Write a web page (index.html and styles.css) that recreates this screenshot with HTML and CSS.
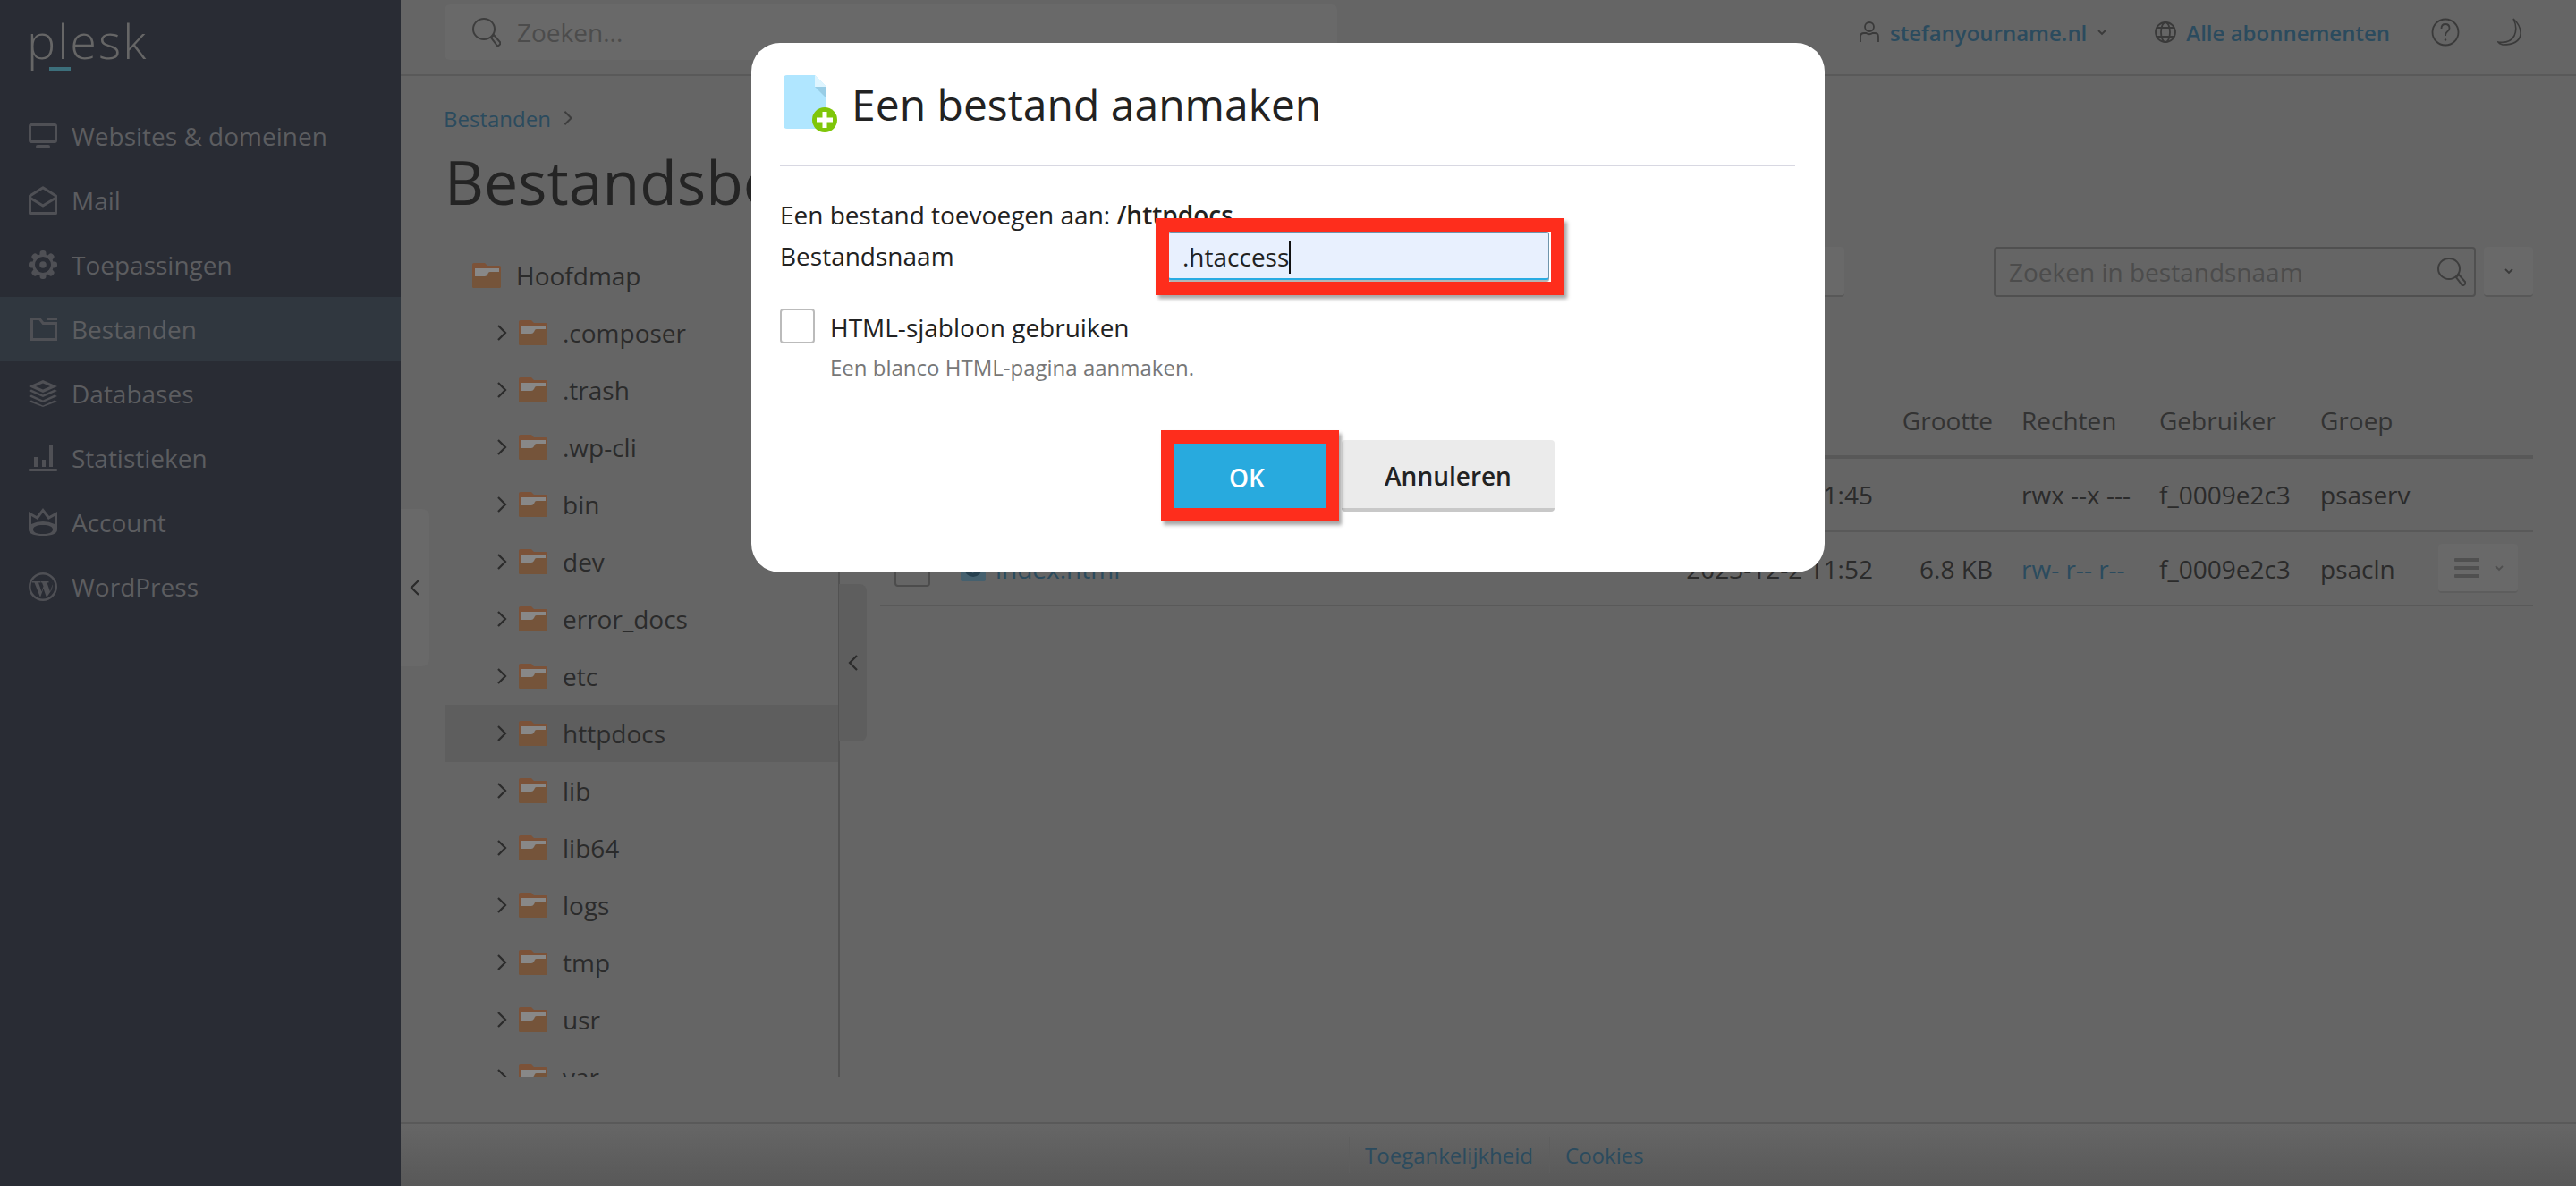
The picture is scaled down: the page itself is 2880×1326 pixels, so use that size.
FILE: index.html
```html
<!DOCTYPE html>
<html lang="nl">
<head>
  <meta charset="UTF-8" />
  <title>Bestandsbeheer</title>
  <link rel="stylesheet" href="styles.css">
</head>
<body>

<svg class="defs" width="0" height="0">
  <defs>
    <symbol id="folder" viewBox="0 0 32 28">
      <path d="M0 2q0-2 2-2h12l3 3h13q2 0 2 2v21q0 2-2 2H2q-2 0-2-2z" fill="#7c5238"/>
      <rect x="3" y="6" width="27" height="10" fill="#888"/>
      <path d="M0 15h14q2 0 3-2l1-2q.5-1 2-1h12v16q0 2-2 2H2q-2 0-2-2z" fill="#75543a"/>
    </symbol>
    <symbol id="chev-right" viewBox="0 0 12 20">
      <path d="M2 2l8 8-8 8" fill="none" stroke="currentColor" stroke-width="2.2"/>
    </symbol>
    <symbol id="chev-left" viewBox="0 0 12 20">
      <path d="M10 2l-8 8 8 8" fill="none" stroke="currentColor" stroke-width="2.2"/>
    </symbol>
    <symbol id="chev-down" viewBox="0 0 12 8">
      <path d="M2 2l4 4 4-4" fill="none" stroke="currentColor" stroke-width="1.8"/>
    </symbol>
    <symbol id="search" viewBox="0 0 32 32">
      <ellipse cx="13" cy="12.5" rx="12" ry="11.5" fill="none" stroke="currentColor" stroke-width="2"/>
      <path d="M21 22l3-3 7 8q1 2-1 3.500t-3-.5z" fill="none" stroke="currentColor" stroke-width="2"/>
    </symbol>
  </defs>
</svg>

<div class="app">
  <aside class="sidebar">
    <div class="logo"><span class="logo-text">plesk</span><span class="logo-bar"></span></div>
    <nav class="nav">
      <a class="nav-item">
        <svg class="nav-icon" viewBox="0 0 32 32"><rect class="line" x="1.500" y="3.500" width="29" height="19" rx="1.500"/><rect x="8" y="26" width="16" height="4" rx="2"/></svg>
        Websites &amp; domeinen
      </a>
      <a class="nav-item">
        <svg class="nav-icon" viewBox="0 0 32 32"><path class="line" d="M1.500 11L16 1.800 30.500 11v19.500h-29z"/><path class="line" d="M2 13.500l14 8.500 14-8.500"/></svg>
        Mail
      </a>
      <a class="nav-item">
        <svg class="nav-icon" viewBox="0 0 32 32">
          <circle class="line" cx="16" cy="16" r="10.500"/>
          <rect x="12.500" y="0" width="7" height="7" rx="3"/>
          <rect x="12.500" y="0" width="7" height="7" rx="3" transform="rotate(45 16 16)"/>
          <rect x="12.500" y="0" width="7" height="7" rx="3" transform="rotate(90 16 16)"/>
          <rect x="12.500" y="0" width="7" height="7" rx="3" transform="rotate(135 16 16)"/>
          <rect x="12.500" y="0" width="7" height="7" rx="3" transform="rotate(180 16 16)"/>
          <rect x="12.500" y="0" width="7" height="7" rx="3" transform="rotate(225 16 16)"/>
          <rect x="12.500" y="0" width="7" height="7" rx="3" transform="rotate(270 16 16)"/>
          <rect x="12.500" y="0" width="7" height="7" rx="3" transform="rotate(315 16 16)"/>
          <circle cx="16" cy="16" r="3.800"/>
        </svg>
        Toepassingen
      </a>
      <a class="nav-item active">
        <svg class="nav-icon" viewBox="0 0 32 32"><path d="M2 3h11l4 5h15v21H2zm3 3v20h24V11H15.500l-4-5zM20 3h12v3H20z" fill-rule="evenodd"/></svg>
        Bestanden
      </a>
      <a class="nav-item">
        <svg class="nav-icon" viewBox="0 0 32 32"><path d="M16 1l16 7-16 7L0 8zm0 3.500L8 8l8 3.500L24 8z" fill-rule="evenodd"/><path d="M0 13l3-1.500 13 6 13-6 3 1.500-16 7z"/><path d="M0 19l3-1.500 13 6 13-6 3 1.500-16 7z"/><path d="M0 25l3-1.500 13 6 13-6 3 1.500-16 6z"/></svg>
        Databases
      </a>
      <a class="nav-item">
        <svg class="nav-icon" viewBox="0 0 32 32"><rect x="0" y="28" width="32" height="3" rx="1"/><rect x="6" y="15" width="4" height="11"/><rect x="15" y="18" width="4" height="8"/><rect x="23" y="1" width="4" height="25"/></svg>
        Statistieken
      </a>
      <a class="nav-item">
        <svg class="nav-icon" viewBox="0 0 32 32"><path d="M16 0l7 9 9-5v20q0 7-16 7T0 24V4l9 5zM16 5l-6 8-7-4v9q6-3 13-3t13 3V9l-7 4zM16 19C9 19 5 21 5 24s4 5 11 5 11-2 11-5-4-5-11-5z" fill-rule="evenodd"/></svg>
        Account
      </a>
      <a class="nav-item">
        <svg class="nav-icon" viewBox="0 0 32 32"><path d="M16 0a16 16 0 1 0 0 32 16 16 0 0 0 0-32zm0 2.500a13.500 13.500 0 1 1 0 27 13.500 13.500 0 0 1 0-27z" fill-rule="evenodd"/><path d="M4 10h9v1.500h-2l3.500 10 2-6-1.500-4h-1.500V10h9v1.500h-2l3.500 10 2-6q1-3-1-5.500 3 4 .5 10L20 28l-3.500-10L13 28 6.500 11.500H4z"/></svg>
        WordPress
      </a>
    </nav>
  </aside>

  <div class="main">
    <header class="topbar">
      <div class="global-search">
        <svg class="icon-search"><use href="#search"></use></svg>
        <span>Zoeken...</span>
      </div>
      <div class="top-links">
        <a class="top-link user-link">
          <svg class="top-icon" viewBox="0 0 24 24"><circle cx="12" cy="6" r="5"/><path d="M2 23v-6q0-4 4-4h2.500q3.500 2.500 7 0H18q4 0 4 4v6"/></svg>
          stefanyourname.nl
          <svg class="chev-small"><use href="#chev-down"></use></svg>
        </a>
        <a class="top-link">
          <svg class="top-icon" viewBox="0 0 24 24"><circle cx="12" cy="12" r="11"/><ellipse cx="12" cy="12" rx="5" ry="11"/><path d="M2 7h20M2 17h20"/></svg>
          Alle abonnementen
        </a>
        <svg class="help-icon" viewBox="0 0 32 32"><circle cx="16" cy="16" r="14.500"/><path d="M11.500 12q0-5 4.500-5t4.500 4.500q0 2.500-2.500 4-2 1.500-2 4.500"/><circle class="dot" cx="16" cy="24.500" r="1.200"/></svg>
        <svg class="moon-icon" viewBox="0 0 28 32"><path d="M18 1q9 8 8 18-2 11-20 11-3-.5-5-3 13 2 18-7 4-9-1-19z"/></svg>
      </div>
    </header>

    <main class="content">
      <div class="breadcrumb">
        <a>Bestanden</a>
        <svg class="crumb-chev"><use href="#chev-right"></use></svg>
      </div>
      <h1>Bestandsbeheer</h1>

      <div class="manager">
        <div class="tree">
          <div class="tree-row root"><svg class="folder"><use href="#folder"></use></svg>Hoofdmap</div>
          <div class="tree-row"><svg class="tree-chev"><use href="#chev-right"></use></svg><svg class="folder"><use href="#folder"></use></svg>.composer</div>
          <div class="tree-row"><svg class="tree-chev"><use href="#chev-right"></use></svg><svg class="folder"><use href="#folder"></use></svg>.trash</div>
          <div class="tree-row"><svg class="tree-chev"><use href="#chev-right"></use></svg><svg class="folder"><use href="#folder"></use></svg>.wp-cli</div>
          <div class="tree-row"><svg class="tree-chev"><use href="#chev-right"></use></svg><svg class="folder"><use href="#folder"></use></svg>bin</div>
          <div class="tree-row"><svg class="tree-chev"><use href="#chev-right"></use></svg><svg class="folder"><use href="#folder"></use></svg>dev</div>
          <div class="tree-row"><svg class="tree-chev"><use href="#chev-right"></use></svg><svg class="folder"><use href="#folder"></use></svg>error_docs</div>
          <div class="tree-row"><svg class="tree-chev"><use href="#chev-right"></use></svg><svg class="folder"><use href="#folder"></use></svg>etc</div>
          <div class="tree-row selected"><svg class="tree-chev"><use href="#chev-right"></use></svg><svg class="folder"><use href="#folder"></use></svg>httpdocs</div>
          <div class="tree-row"><svg class="tree-chev"><use href="#chev-right"></use></svg><svg class="folder"><use href="#folder"></use></svg>lib</div>
          <div class="tree-row"><svg class="tree-chev"><use href="#chev-right"></use></svg><svg class="folder"><use href="#folder"></use></svg>lib64</div>
          <div class="tree-row"><svg class="tree-chev"><use href="#chev-right"></use></svg><svg class="folder"><use href="#folder"></use></svg>logs</div>
          <div class="tree-row"><svg class="tree-chev"><use href="#chev-right"></use></svg><svg class="folder"><use href="#folder"></use></svg>tmp</div>
          <div class="tree-row"><svg class="tree-chev"><use href="#chev-right"></use></svg><svg class="folder"><use href="#folder"></use></svg>usr</div>
          <div class="tree-row"><svg class="tree-chev"><use href="#chev-right"></use></svg><svg class="folder"><use href="#folder"></use></svg>var</div>
        </div>

        <div class="files">
          <div class="toolbar">
            <div class="tool-btn"></div>
            <div class="file-search">
              <span>Zoeken in bestandsnaam</span>
              <svg class="icon-search"><use href="#search"></use></svg>
            </div>
            <div class="drop-btn"><svg class="chev-small"><use href="#chev-down"></use></svg></div>
          </div>

          <table class="file-table">
            <colgroup>
              <col class="c-name"><col class="c-date"><col class="c-size"><col class="c-perm"><col class="c-user"><col class="c-group"><col class="c-act">
            </colgroup>
            <thead>
              <tr><th>Naam</th><th>Gewijzigd</th><th class="num">Grootte</th><th>Rechten</th><th>Gebruiker</th><th>Groep</th><th></th></tr>
            </thead>
            <tbody>
              <tr>
                <td></td>
                <td class="num">2023-12-2 11:45</td>
                <td class="num"></td>
                <td>rwx --x ---</td>
                <td>f_0009e2c3</td>
                <td>psaserv</td>
                <td></td>
              </tr>
              <tr>
                <td>
                  <div class="file-name">
                    <span class="row-check"></span>
                    <svg class="file-icon" viewBox="0 0 28 28"><rect width="28" height="28" rx="2" fill="#45606e"/><circle cx="14" cy="13" r="10" fill="#27404f"/><path d="M5 14q8-6 18-3-6 3-9 8z" fill="#45606e"/></svg>
                    <a>index.html</a>
                  </div>
                </td>
                <td class="num">2023-12-2 11:52</td>
                <td class="num">6.8 KB</td>
                <td><a>rw- r-- r--</a></td>
                <td>f_0009e2c3</td>
                <td>psacln</td>
                <td>
                  <div class="row-menu">
                    <svg class="burger" viewBox="0 0 28 22"><rect width="28" height="4" rx="1"/><rect y="9" width="28" height="4" rx="1"/><rect y="18" width="28" height="4" rx="1"/></svg>
                    <svg class="chev-small"><use href="#chev-down"></use></svg>
                  </div>
                </td>
              </tr>
            </tbody>
          </table>
        </div>

        <div class="tree-handle"><svg class="handle-chev"><use href="#chev-left"></use></svg></div>
      </div>
    </main>

    <footer class="footer">
      <a>Toegankelijkheid</a>
      <a>Cookies</a>
    </footer>
  </div>
</div>

<div class="side-handle"><svg class="handle-chev"><use href="#chev-left"></use></svg></div>

<div class="dialog">
  <div class="dialog-head">
    <svg class="dialog-icon" viewBox="0 0 62 64">
      <path d="M4 0h31l13 13v42q0 5-4 5H4q-4 0-4-4V4q0-4 4-4z" fill="#b0e6ff"/>
      <path d="M35 0l13 13H35z" fill="#dff5ff"/>
      <path d="M35 13h13v13z" fill="#98cde6"/>
      <circle cx="46" cy="50" r="14" fill="#7fc60a"/>
      <path d="M43.500 41h5v6.500H55v5h-6.500V59h-5v-6.500H37v-5h6.500z" fill="#fff"/>
    </svg>
    <h2>Een bestand aanmaken</h2>
  </div>

  <div class="dialog-body">
    <p class="add-line">Een bestand toevoegen aan: <b>/httpdocs</b></p>
    <div class="form-row">
      <label>Bestandsnaam</label>
      <div class="text-input"><span class="typed">.htaccess</span></div>
    </div>
    <div class="check-row">
      <span class="checkbox"></span>
      <label>HTML-sjabloon gebruiken</label>
    </div>
    <p class="hint">Een blanco HTML-pagina aanmaken.</p>
    <div class="buttons">
      <button class="btn btn-ok">OK</button>
      <button class="btn btn-cancel">Annuleren</button>
    </div>
  </div>

  <div class="callout callout-input"></div>
  <div class="callout callout-ok"></div>
</div>

</body>
</html>
```

FILE: styles.css
```css
* { box-sizing: border-box; }

body {
  margin: 0;
  width: 2880px;
  height: 1326px;
  overflow: hidden;
  position: relative;
  background: #656565;
  color: #2b2b2b;
  font-family: "Open Sans", sans-serif;
  font-size: 28px;
}

.defs { position: absolute; }

.app {
  display: flex;
  height: 1326px;
}

/* sidebar */
.sidebar {
  width: 448px;
  flex: none;
  background: #292c34;
  color: #5c5d60;
}

.logo {
  height: 116px;
  padding-left: 30px;
  position: relative;
}

.logo-text {
  display: block;
  font-size: 54px;
  font-weight: 300;
  line-height: 64px;
  letter-spacing: 2px;
  padding-top: 13px;
  color: #666;
}

.logo-bar {
  position: absolute;
  left: 55px;
  top: 75px;
  width: 24px;
  height: 4px;
  background: #3c6f7b;
}

.nav-item {
  display: flex;
  align-items: center;
  gap: 16px;
  height: 72px;
  padding-left: 32px;
}

.nav-item.active { background: #30373f; }

.nav-icon {
  width: 32px;
  height: 32px;
  flex: none;
  fill: #4f5055;
}

.nav-icon .line {
  fill: none;
  stroke: #4f5055;
  stroke-width: 3;
  stroke-linejoin: round;
}

/* main column */
.main {
  flex: 1;
  display: flex;
  flex-direction: column;
  min-width: 0;
}

.topbar {
  height: 85px;
  flex: none;
  display: flex;
  align-items: flex-start;
  padding: 5px 60px 0 49px;
  border-bottom: 2px solid #595959;
}

.global-search {
  width: 998px;
  height: 62px;
  display: flex;
  align-items: center;
  gap: 18px;
  padding-left: 31px;
  background: #696969;
  border-radius: 6px;
  color: #4c4c4c;
}

.icon-search {
  width: 32px;
  height: 32px;
  flex: none;
  color: #3d3d3d;
}

.top-links {
  margin-left: auto;
  height: 62px;
  display: flex;
  align-items: center;
  color: #2b4b5e;
  font-size: 24px;
  font-weight: 600;
}

.top-link {
  display: flex;
  align-items: center;
  gap: 11px;
  margin-right: 46px;
}

.user-link { margin-right: 53px; }

.top-icon {
  width: 24px;
  height: 24px;
  fill: none;
  stroke: #3a3a3a;
  stroke-width: 1.8;
}

.chev-small {
  width: 12px;
  height: 8px;
  color: #3a3a3a;
}

.help-icon {
  width: 32px;
  height: 32px;
  fill: none;
  stroke: #3a3a3a;
  stroke-width: 1.8;
  margin-right: 42px;
}

.help-icon .dot {
  fill: #3a3a3a;
  stroke: none;
}

.moon-icon {
  width: 28px;
  height: 32px;
  fill: none;
  stroke: #3a3a3a;
  stroke-width: 1.6;
}

/* page content */
.content {
  flex: 1;
  padding: 32px 48px 0 49px;
  min-height: 0;
}

.breadcrumb {
  display: flex;
  align-items: center;
  gap: 13px;
  height: 30px;
  margin-left: -1px;
  font-size: 24px;
  color: #2b4b5e;
}

.crumb-chev {
  width: 12px;
  height: 18px;
  color: #3d3d3d;
}

h1 {
  margin: 10px 0 0;
  font-size: 68px;
  font-weight: 400;
  line-height: 92px;
  color: #242424;
}

.manager {
  position: relative;
  display: flex;
  margin-top: 27px;
  height: 928px;
}

.tree {
  width: 442px;
  flex: none;
  height: 928px;
  overflow: hidden;
  border-right: 2px solid #525252;
}

.tree-row {
  display: flex;
  align-items: center;
  height: 64px;
  padding-left: 58px;
  color: #2b2b2b;
}

.tree-row.root { padding-left: 31px; }
.tree-row.selected { background: #5e5e5e; }

.tree-chev {
  width: 12px;
  height: 20px;
  margin-right: 13px;
  color: #2b2b2b;
  flex: none;
}

.folder {
  width: 32px;
  height: 28px;
  margin-right: 17px;
  flex: none;
}

.files {
  flex: 1;
  min-width: 0;
  margin-left: 45px;
}

.toolbar {
  display: flex;
  height: 56px;
}

.tool-btn {
  width: 300px;
  margin-left: 778px;
  background: #696969;
  border-bottom: 2px solid #585858;
  border-radius: 4px;
}

.file-search {
  width: 539px;
  margin-left: 167px;
  display: flex;
  align-items: center;
  justify-content: space-between;
  padding: 0 9px 0 15px;
  border: 2px solid #505050;
  border-radius: 4px;
  color: #4c4c4c;
}

.drop-btn {
  width: 55px;
  margin-left: 9px;
  display: flex;
  align-items: center;
  justify-content: center;
  background: #696969;
  border-bottom: 2px solid #585858;
  border-radius: 4px;
}

.file-table {
  width: 1848px;
  margin-top: 99px;
  table-layout: fixed;
  border-collapse: collapse;
}

.c-name { width: 806px; }
.c-date { width: 320px; }
.c-size { width: 134px; }
.c-perm { width: 154px; }
.c-user { width: 180px; }
.c-group { width: 132px; }
.c-act { width: 122px; }

.file-table th {
  height: 80px;
  padding: 0 16px;
  text-align: left;
  font-weight: 400;
  color: #333;
  border-bottom: 4px solid #585858;
}

.file-table th.num { text-align: right; }

.file-table td {
  height: 83px;
  padding: 0 16px;
  white-space: nowrap;
  color: #2b2b2b;
  border-bottom: 2px solid #595959;
}

.file-table td.num { text-align: right; }
.file-table a { color: #2b4b5e; }

.file-name {
  display: flex;
  align-items: center;
}

.row-check {
  width: 40px;
  height: 40px;
  border: 2px solid #4c4c4c;
  border-radius: 4px;
  margin-right: 34px;
}

.file-icon {
  width: 28px;
  height: 28px;
  margin-right: 11px;
}

.row-menu {
  width: 89px;
  height: 55px;
  display: flex;
  align-items: center;
  gap: 16px;
  padding-left: 18px;
  background: #696969;
  border-bottom: 2px solid #5d5d5d;
  border-radius: 4px;
}

.row-menu .chev-small { color: #4f4f4f; }

.burger {
  width: 28px;
  height: 22px;
  fill: #505050;
}

/* these two stick out over their neighbours */
.tree-handle {
  position: absolute;
  left: 441px;
  top: 377px;
  width: 31px;
  height: 176px;
  display: flex;
  align-items: center;
  justify-content: center;
  background: #5e5e5e;
  border-radius: 0 8px 8px 0;
}

.side-handle {
  position: absolute;
  left: 448px;
  top: 569px;
  width: 32px;
  height: 176px;
  display: flex;
  align-items: center;
  justify-content: center;
  background: #696969;
  border-radius: 0 8px 8px 0;
}

.handle-chev {
  width: 12px;
  height: 20px;
  color: #2b2b2b;
}

.footer {
  height: 72px;
  flex: none;
  display: flex;
  align-items: center;
  padding-left: 1060px;
  border-top: 3px solid #595959;
  background: linear-gradient(#666, #585858);
  color: #2b4b5e;
  font-size: 24px;
}

.footer a {
  padding: 4px 0 4px 17px;
  margin-right: 18px;
  border-left: 1px solid #5e5e5e;
}

/* modal */
.dialog {
  position: absolute;
  left: 840px;
  top: 48px;
  width: 1200px;
  height: 592px;
  padding: 0 33px 0 32px;
  background: #fff;
  border-radius: 32px;
  color: #222;
}

.dialog-head {
  display: flex;
  height: 138px;
  padding-top: 36px;
  border-bottom: 2px solid #d8d8e2;
}

.dialog-icon {
  width: 62px;
  height: 64px;
  margin: 0 0 0 4px;
  flex: none;
}

h2 {
  margin: 0 0 0 14px;
  font-size: 48px;
  font-weight: 400;
  line-height: 66px;
}

.add-line {
  margin: 35px 0 0;
  line-height: 38px;
}

.add-line b { font-weight: 600; }

.form-row {
  display: flex;
  align-items: center;
}

.form-row label { width: 434px; }

.text-input {
  width: 426px;
  height: 54px;
  display: flex;
  align-items: center;
  padding: 4px 0 0 15px;
  background: #e8f0fe;
  border: 1px solid #6f95ad;
  border-bottom: 2px solid #29abe2;
  border-radius: 3px;
  box-shadow: 0 2px 0 #b5b5b5;
}

.typed {
  line-height: 37px;
  border-right: 2px solid #111;
}

.check-row {
  display: flex;
  align-items: center;
  gap: 17px;
  margin-top: 31px;
}

.checkbox {
  width: 39px;
  height: 39px;
  border: 2px solid #bbb;
  border-radius: 4px;
}

.check-row label { padding-top: 3px; }

.hint {
  margin: 9px 0 0 56px;
  font-size: 24px;
  color: #777;
}

.buttons {
  display: flex;
  gap: 11px;
  margin: 65px 0 0 427px;
}

.btn {
  height: 80px;
  padding: 4px 0 0;
  border: none;
  border-radius: 4px;
  font-family: inherit;
  font-size: 28px;
  font-weight: 600;
}

.btn-ok {
  width: 190px;
  background: #28aade;
  color: #fff;
}

.btn-cancel {
  width: 238px;
  background: #ebebeb;
  border-bottom: 4px solid #c8c8c8;
  color: #222;
}

.callout {
  position: absolute;
  border: 15px solid #fe2d1c;
  box-shadow: 3px 4px 4px rgba(0, 0, 0, 0.35);
}

.callout-input {
  left: 452px;
  top: 196px;
  width: 457px;
  height: 86px;
}

.callout-ok {
  left: 458px;
  top: 433px;
  width: 199px;
  height: 102px;
}
```
